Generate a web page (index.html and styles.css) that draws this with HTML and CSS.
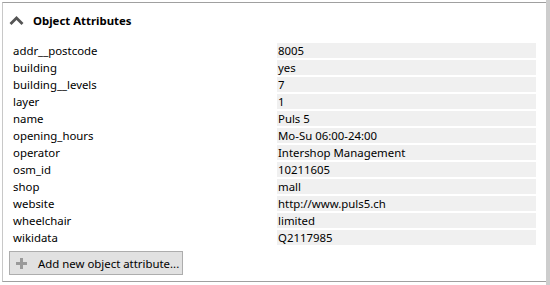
FILE: index.html
```html
<!DOCTYPE html>
<html lang="en">
<head>
    <meta charset="UTF-8">
    <title>Object Attributes</title>
    <link rel="stylesheet" href="styles.css">
</head>
<body>
    <div class="frame">
        <div class="panel">
            <div class="header">
                <svg class="chevron" width="15" height="9" viewBox="0 0 15 9">
                    <path d="M1.5 8 L7.5 2 L13.5 8" fill="none" stroke="#555" stroke-width="2.8"/>
                </svg>
                <span class="title">Object Attributes</span>
            </div>
            <div class="attrs">
                <div class="key">addr__postcode</div><div class="val">8005</div>
                <div class="key">building</div><div class="val">yes</div>
                <div class="key">building__levels</div><div class="val">7</div>
                <div class="key">layer</div><div class="val">1</div>
                <div class="key">name</div><div class="val">Puls 5</div>
                <div class="key">opening_hours</div><div class="val">Mo-Su 06:00-24:00</div>
                <div class="key">operator</div><div class="val">Intershop Management</div>
                <div class="key">osm_id</div><div class="val">10211605</div>
                <div class="key">shop</div><div class="val">mall</div>
                <div class="key">website</div><div class="val">http://www.puls5.ch</div>
                <div class="key">wheelchair</div><div class="val">limited</div>
                <div class="key">wikidata</div><div class="val">Q2117985</div>
            </div>
            <button class="add-btn" type="button">
                <svg class="plus" width="11" height="11" viewBox="0 0 11 11">
                    <path d="M4 0 H7 V4 H11 V7 H7 V11 H4 V7 H0 V4 H4 Z" fill="#9a9a9a"/>
                </svg>
                <span>Add new object attribute...</span>
            </button>
        </div>
        <div class="scrollbar"></div>
    </div>
</body>
</html>
```

FILE: styles.css
```css
html, body {
    margin: 0;
    padding: 0;
    background-color: #fff;
}
body {
    width: 550px;
    height: 285px;
    overflow: hidden;
    font-family: "Noto Sans", "Open Sans", Arial, sans-serif;
    font-size: 11.4px;
    color: #000;
}
.frame {
    display: flex;
    height: 285px;
}
.panel {
    flex: 1;
    margin-top: 2px;
    height: 278px;
    border-top: 1px solid #a0a0a0;
    border-bottom: 1px solid #a0a0a0;
    border-left: 1px solid #c8c8c8;
    margin-left: 2px;
}
.scrollbar {
    width: 4px;
    background-color: #cdcdcd;
}
.header {
    display: flex;
    align-items: center;
    height: 34px;
    padding-left: 6px;
}
.chevron {
    margin-right: 9px;
    margin-top: 1px;
}
.title {
    font-weight: bold;
    font-size: 11.4px;
}
.attrs {
    display: grid;
    grid-template-columns: 264px 259px;
    row-gap: 2px;
    padding-left: 10px;
    margin-top: 6px;
}
.key, .val {
    height: 15px;
    line-height: 15px;
    white-space: nowrap;
}
.val {
    background-color: #f0f0f0;
    padding-left: 1px;
}
.add-btn {
    display: flex;
    align-items: center;
    margin: 6px 0 0 6px;
    height: 24px;
    width: 174px;
    padding: 0 0 0 6px;
    background-color: #e1e1e1;
    border: 1px solid #adadad;
    font-family: "Noto Sans", "Open Sans", Arial, sans-serif;
    font-size: 11.4px;
    color: #000;
    white-space: nowrap;
}
.plus {
    margin-right: 11px;
}
```
